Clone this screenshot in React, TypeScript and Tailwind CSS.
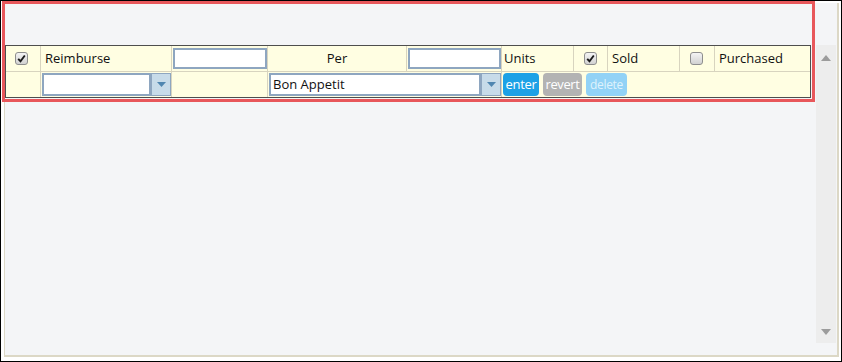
import React from "react";

const font = { fontFamily: '"Open Sans", "Noto Sans", Arial, sans-serif' };

function Check({ checked }: { checked?: boolean }) {
  return (
    <span className="flex h-[13px] w-[13px] items-center justify-center rounded-[3px] border border-[#8e8e8e] bg-gradient-to-b from-[#f4f4f4] to-[#d2d2d2]">
      {checked && (
        <svg width="9" height="9" viewBox="0 0 9 9">
          <path d="M1.2 4.8 L3.5 7.2 L7.8 1.5" fill="none" stroke="#1a1a1a" strokeWidth="1.9" />
        </svg>
      )}
    </span>
  );
}

function TextBox({ w }: { w: string }) {
  return <div className={`h-[21px] ${w} border-2 border-[#8ea6c0] bg-white`} />;
}

function Select({ value, w }: { value?: string; w: string }) {
  return (
    <div className={`flex h-[23px] ${w}`}>
      <div className="flex flex-1 items-center border-2 border-[#8ea6c0] bg-white pl-[2px] text-[13px] text-[#111]">
        {value}
      </div>
      <div className="flex w-[20px] items-center justify-center border border-[#8ea6c0] bg-[#c7dbe9]">
        <svg width="9" height="5" viewBox="0 0 9 5">
          <path d="M0 0 H9 L4.5 5 Z" fill="#4f86b0" />
        </svg>
      </div>
    </div>
  );
}

export default function App() {
  const cell = "flex h-[25px] items-center border-l border-[#d8d4bf]";
  return (
    <div className="relative h-[362px] w-[842px] overflow-hidden border border-black bg-white" style={font}>
      <div className="ml-[3px] mr-[2px] mt-[2px] flex h-[354px] border-b-2 border-l border-r-2 border-[#dcd8c6] bg-[#f4f5f7]">
        <div className="flex-1 pt-[42px]">
          <div className="w-[806px] border border-[#4e4e4e] bg-[#fffee2] text-[13px] text-[#111]">
            <div className="grid grid-cols-[34px_131px_96px_139px_95px_72px_34px_72px_35px_96px]">
              <div className="flex h-[25px] items-center pl-[9px]">
                <Check checked />
              </div>
              <div className={`${cell} pl-[4px]`}>Reimburse</div>
              <div className={`${cell} pl-[1px]`}>
                <TextBox w="w-[95px]" />
              </div>
              <div className={`${cell} justify-center`}>Per</div>
              <div className={`${cell} pl-[1px]`}>
                <TextBox w="w-[94px]" />
              </div>
              <div className={`${cell} pl-[2px]`}>Units</div>
              <div className={`${cell} pl-[10px]`}>
                <Check checked />
              </div>
              <div className={`${cell} pl-[4px]`}>Sold</div>
              <div className={`${cell} pl-[10px]`}>
                <Check />
              </div>
              <div className={`${cell} pl-[4px]`}>Purchased</div>
            </div>
            <div className="grid grid-cols-[34px_131px_96px_234px_309px] border-t border-[#d8d4bf]">
              <div className="h-[25px]" />
              <div className={`${cell} pl-[1px]`}>
                <Select w="w-[130px]" />
              </div>
              <div className={cell} />
              <div className={`${cell} pl-[1px]`}>
                <Select value="Bon Appetit" w="w-[233px]" />
              </div>
              <div className={`${cell} gap-[4px] pl-[1px]`}>
                <button className="h-[23px] w-[36px] rounded-[4px] bg-[#1ca1e6] px-0 text-[13px] tracking-[-0.3px] text-white">enter</button>
                <button className="h-[23px] w-[39px] rounded-[4px] bg-[#b3b3b3] px-0 text-[13px] tracking-[-0.4px] text-white">revert</button>
                <button className="h-[23px] w-[41px] rounded-[4px] bg-[#92d2f6] px-0 text-[12px] tracking-[-0.3px] text-[#dff2fc]">delete</button>
              </div>
            </div>
          </div>
        </div>
        <div className="mr-[1px] mt-[42px] flex h-[298px] w-[20px] flex-col items-center justify-between bg-[#ededed] pb-[8px] pt-[10px]">
          <svg width="10" height="6" viewBox="0 0 10 6">
            <path d="M0 6 L5 0 L10 6 Z" fill="#9c9c9c" />
          </svg>
          <svg width="10" height="6" viewBox="0 0 10 6">
            <path d="M0 0 H10 L5 6 Z" fill="#9c9c9c" />
          </svg>
        </div>
      </div>
      <div className="absolute left-[1px] top-0 h-[101px] w-[813px] border-[3px] border-[#e8575b]" />
    </div>
  );
}
